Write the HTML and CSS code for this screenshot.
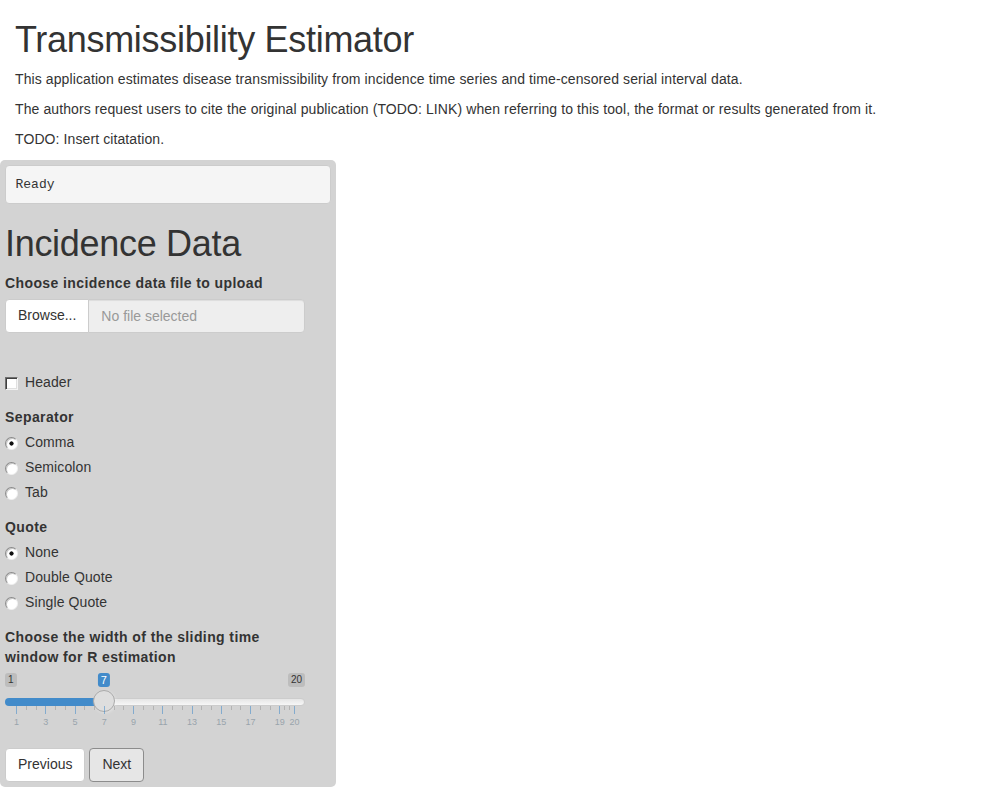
FILE: index.html
```html
<!DOCTYPE html>
<html lang="en">
<head>
<meta charset="utf-8">
<title>Transmissibility Estimator</title>
<link rel="stylesheet" href="styles.css">
</head>
<body>
<div class="page">
  <h1 class="title">Transmissibility Estimator</h1>
  <p>This application estimates disease transmissibility from incidence time series and time-censored serial interval data.</p>
  <p>The authors request users to cite the original publication (TODO: LINK) when referring to this tool, the format or results generated from it.</p>
  <p>TODO: Insert citatation.</p>

  <div class="layout">
    <div class="sidebar">
      <pre class="status">Ready</pre>
      <h1 class="section-title">Incidence Data</h1>

      <div class="form-group">
        <label class="control-label">Choose incidence data file to upload</label>
        <div class="input-group">
          <span class="btn btn-file">Browse...</span>
          <input type="text" class="form-control" placeholder="No file selected" readonly>
        </div>
        <div class="file-progress"></div>
      </div>

      <div class="form-group">
        <label class="choice"><input type="checkbox" class="check-input"><span>Header</span></label>
      </div>

      <div class="form-group">
        <label class="control-label">Separator</label>
        <div class="options">
          <label class="choice"><input type="radio" class="radio-input" name="sep" checked><span>Comma</span></label>
          <label class="choice"><input type="radio" class="radio-input" name="sep"><span>Semicolon</span></label>
          <label class="choice"><input type="radio" class="radio-input" name="sep"><span>Tab</span></label>
        </div>
      </div>

      <div class="form-group">
        <label class="control-label">Quote</label>
        <div class="options">
          <label class="choice"><input type="radio" class="radio-input" name="quote" checked><span>None</span></label>
          <label class="choice"><input type="radio" class="radio-input" name="quote"><span>Double Quote</span></label>
          <label class="choice"><input type="radio" class="radio-input" name="quote"><span>Single Quote</span></label>
        </div>
      </div>

      <div class="form-group">
        <label class="control-label">Choose the width of the sliding time window for R estimation</label>
        <div class="irs">
          <span class="irs-min">1</span>
          <span class="irs-max">20</span>
          <span class="irs-line"></span>
          <span class="irs-bar" style="width: calc((100% - 22px) * 0.31579 + 11px)"></span>
          <span class="irs-handle" style="left: calc((100% - 22px) * 0.31579)"></span>
          <span class="irs-single" style="left: calc((100% - 22px) * 0.31579 + 11px)">7</span>
          <div class="irs-grid">
            <span class="tick" style="left: 0%"></span>
            <span class="tick small" style="left: 3.509%"></span>
            <span class="tick small" style="left: 7.018%"></span>
            <span class="tick" style="left: 10.526%"></span>
            <span class="tick small" style="left: 14.035%"></span>
            <span class="tick small" style="left: 17.544%"></span>
            <span class="tick" style="left: 21.053%"></span>
            <span class="tick small" style="left: 24.561%"></span>
            <span class="tick small" style="left: 28.070%"></span>
            <span class="tick" style="left: 31.579%"></span>
            <span class="tick small" style="left: 35.088%"></span>
            <span class="tick small" style="left: 38.596%"></span>
            <span class="tick" style="left: 42.105%"></span>
            <span class="tick small" style="left: 45.614%"></span>
            <span class="tick small" style="left: 49.123%"></span>
            <span class="tick" style="left: 52.632%"></span>
            <span class="tick small" style="left: 56.140%"></span>
            <span class="tick small" style="left: 59.649%"></span>
            <span class="tick" style="left: 63.158%"></span>
            <span class="tick small" style="left: 66.667%"></span>
            <span class="tick small" style="left: 70.175%"></span>
            <span class="tick" style="left: 73.684%"></span>
            <span class="tick small" style="left: 77.193%"></span>
            <span class="tick small" style="left: 80.702%"></span>
            <span class="tick" style="left: 84.211%"></span>
            <span class="tick small" style="left: 87.719%"></span>
            <span class="tick small" style="left: 91.228%"></span>
            <span class="tick" style="left: 94.737%"></span>
            <span class="tick small" style="left: 96.491%"></span>
            <span class="tick small" style="left: 98.246%"></span>
            <span class="tick" style="left: 100%"></span>
            <span class="tick-label" style="left: 0%">1</span>
            <span class="tick-label" style="left: 10.526%">3</span>
            <span class="tick-label" style="left: 21.053%">5</span>
            <span class="tick-label" style="left: 31.579%">7</span>
            <span class="tick-label" style="left: 42.105%">9</span>
            <span class="tick-label" style="left: 52.632%">11</span>
            <span class="tick-label" style="left: 63.158%">13</span>
            <span class="tick-label" style="left: 73.684%">15</span>
            <span class="tick-label" style="left: 84.211%">17</span>
            <span class="tick-label" style="left: 94.737%">19</span>
            <span class="tick-label" style="left: 100%">20</span>
          </div>
        </div>
      </div>

      <div class="buttons">
        <button class="btn">Previous</button>
        <button class="btn btn-focused">Next</button>
      </div>
    </div>
    <div class="main"></div>
  </div>
</div>
</body>
</html>
```
FILE: styles.css
```css
* {
  box-sizing: border-box;
}

html,
body {
  margin: 0;
}

body {
  font-family: "Liberation Sans", Arial, Helvetica, sans-serif;
  font-size: 14px;
  line-height: 1.428571;
  color: #333;
  background: #fff;
}

.page {
  padding: 0 15px;
}

h1 {
  font-size: 36px;
  font-weight: 500;
  line-height: 1.1;
  margin: 20px 0 10px;
  letter-spacing: -0.3px;
}

p {
  margin: 0 0 10px;
  letter-spacing: 0.1px;
}

.layout {
  display: flex;
  margin: 0 -15px;
}

.sidebar {
  width: 33.3333%;
  background: #d3d3d3;
  border-radius: 5px;
  padding: 5px;
}

.main {
  flex: 1;
}

.status {
  display: block;
  font-family: "Liberation Mono", "Courier New", monospace;
  font-size: 13px;
  line-height: 1.428571;
  padding: 10px 9.5px 9px;
  margin: 0 0 10px;
  background: #f5f5f5;
  border: 1px solid #ccc;
  border-radius: 4px;
  color: #333;
  white-space: pre-wrap;
}

.form-group {
  width: 300px;
  max-width: 100%;
  margin-bottom: 15px;
}

.control-label {
  display: block;
  font-weight: bold;
  margin-bottom: 5px;
  letter-spacing: 0.4px;
}

.input-group {
  display: flex;
  height: 34px;
}

.btn {
  display: inline-block;
  padding: 6px 12px;
  font-family: inherit;
  font-size: 14px;
  line-height: 1.428571;
  color: #333;
  background: #fff;
  border: 1px solid #ccc;
  border-radius: 4px;
  white-space: nowrap;
  cursor: pointer;
}

.btn-file {
  border-radius: 4px 0 0 4px;
  margin-right: -1px;
  position: relative;
  z-index: 1;
}

.form-control {
  flex: 1;
  min-width: 0;
  height: 34px;
  padding: 6px 12px;
  font-family: inherit;
  font-size: 14px;
  line-height: 1.428571;
  color: #555;
  background: #eee;
  border: 1px solid #ccc;
  border-radius: 0 4px 4px 0;
  box-shadow: inset 0 1px 1px rgba(0, 0, 0, 0.075);
  outline: none;
}

.form-control::placeholder {
  color: #999;
}

.file-progress {
  height: 20px;
  margin-bottom: 20px;
  visibility: hidden;
}

.choice {
  display: flex;
  align-items: flex-start;
  gap: 7px;
  min-height: 20px;
  cursor: pointer;
  letter-spacing: 0.1px;
}

.options {
  display: flex;
  flex-direction: column;
  gap: 5px;
}

.check-input,
.radio-input {
  appearance: none;
  -webkit-appearance: none;
  flex: none;
  width: 13px;
  height: 13px;
  margin: 4px 0 0;
  background: #fff;
  border: 1px solid;
}

.check-input {
  border-color: #6f6f6f #f4f4f4 #f4f4f4 #6f6f6f;
  box-shadow: inset 1px 1px 0 #404040, inset -1px -1px 0 #e0e0e0;
}

.radio-input {
  border-radius: 50%;
  border-color: #8c8c8c #f0f0f0 #f0f0f0 #8c8c8c;
  box-shadow: inset 1px 1px 0 #c8c8c8;
}

.radio-input:checked {
  background: radial-gradient(circle at 50% 50%, #111 0 1.8px, #fff 2.4px);
}

/* slider */
.irs {
  position: relative;
  height: 60px;
}

.irs-min,
.irs-max {
  position: absolute;
  top: 0;
  padding: 1px 3px;
  font-size: 10px;
  line-height: 12px;
  color: #333;
  background: rgba(0, 0, 0, 0.1);
  border-radius: 3px;
}

.irs-min {
  left: 0;
}

.irs-max {
  right: 0;
}

.irs-line {
  position: absolute;
  left: 0;
  right: 0;
  top: 25px;
  height: 8px;
  border: 1px solid #ccc;
  border-radius: 16px;
  background: linear-gradient(to bottom, #ddd -50%, #fff 150%);
}

.irs-bar {
  position: absolute;
  left: 0;
  top: 25px;
  height: 8px;
  background: #428bca;
  border-radius: 16px 0 0 16px;
}

.irs-handle {
  position: absolute;
  top: 17px;
  width: 22px;
  height: 22px;
  border: 1px solid #aaa;
  border-radius: 50%;
  background: #dedede;
  box-shadow: 1px 1px 3px rgba(255, 255, 255, 0.3);
}

.irs-single {
  position: absolute;
  top: 0;
  padding: 1px 3px;
  font-size: 11px;
  line-height: 12px;
  color: #fff;
  background: #428bca;
  border-radius: 3px;
  transform: translateX(-50%);
}

.irs-grid {
  position: absolute;
  left: 11px;
  right: 11px;
  bottom: 0;
  height: 27px;
}

.tick {
  position: absolute;
  top: 0;
  width: 1px;
  height: 8px;
  background: #428bca;
  opacity: 0.55;
}

.tick.small {
  height: 4px;
  background: #999;
}

.tick-label {
  position: absolute;
  top: 12px;
  font-size: 9px;
  line-height: 9px;
  color: #99a4ac;
  white-space: nowrap;
  transform: translateX(calc(-50% + 0.5px));
}

.buttons {
  display: flex;
  gap: 4px;
}

.btn-focused {
  background: #e6e6e6;
  border-color: #8c8c8c;
}
```
